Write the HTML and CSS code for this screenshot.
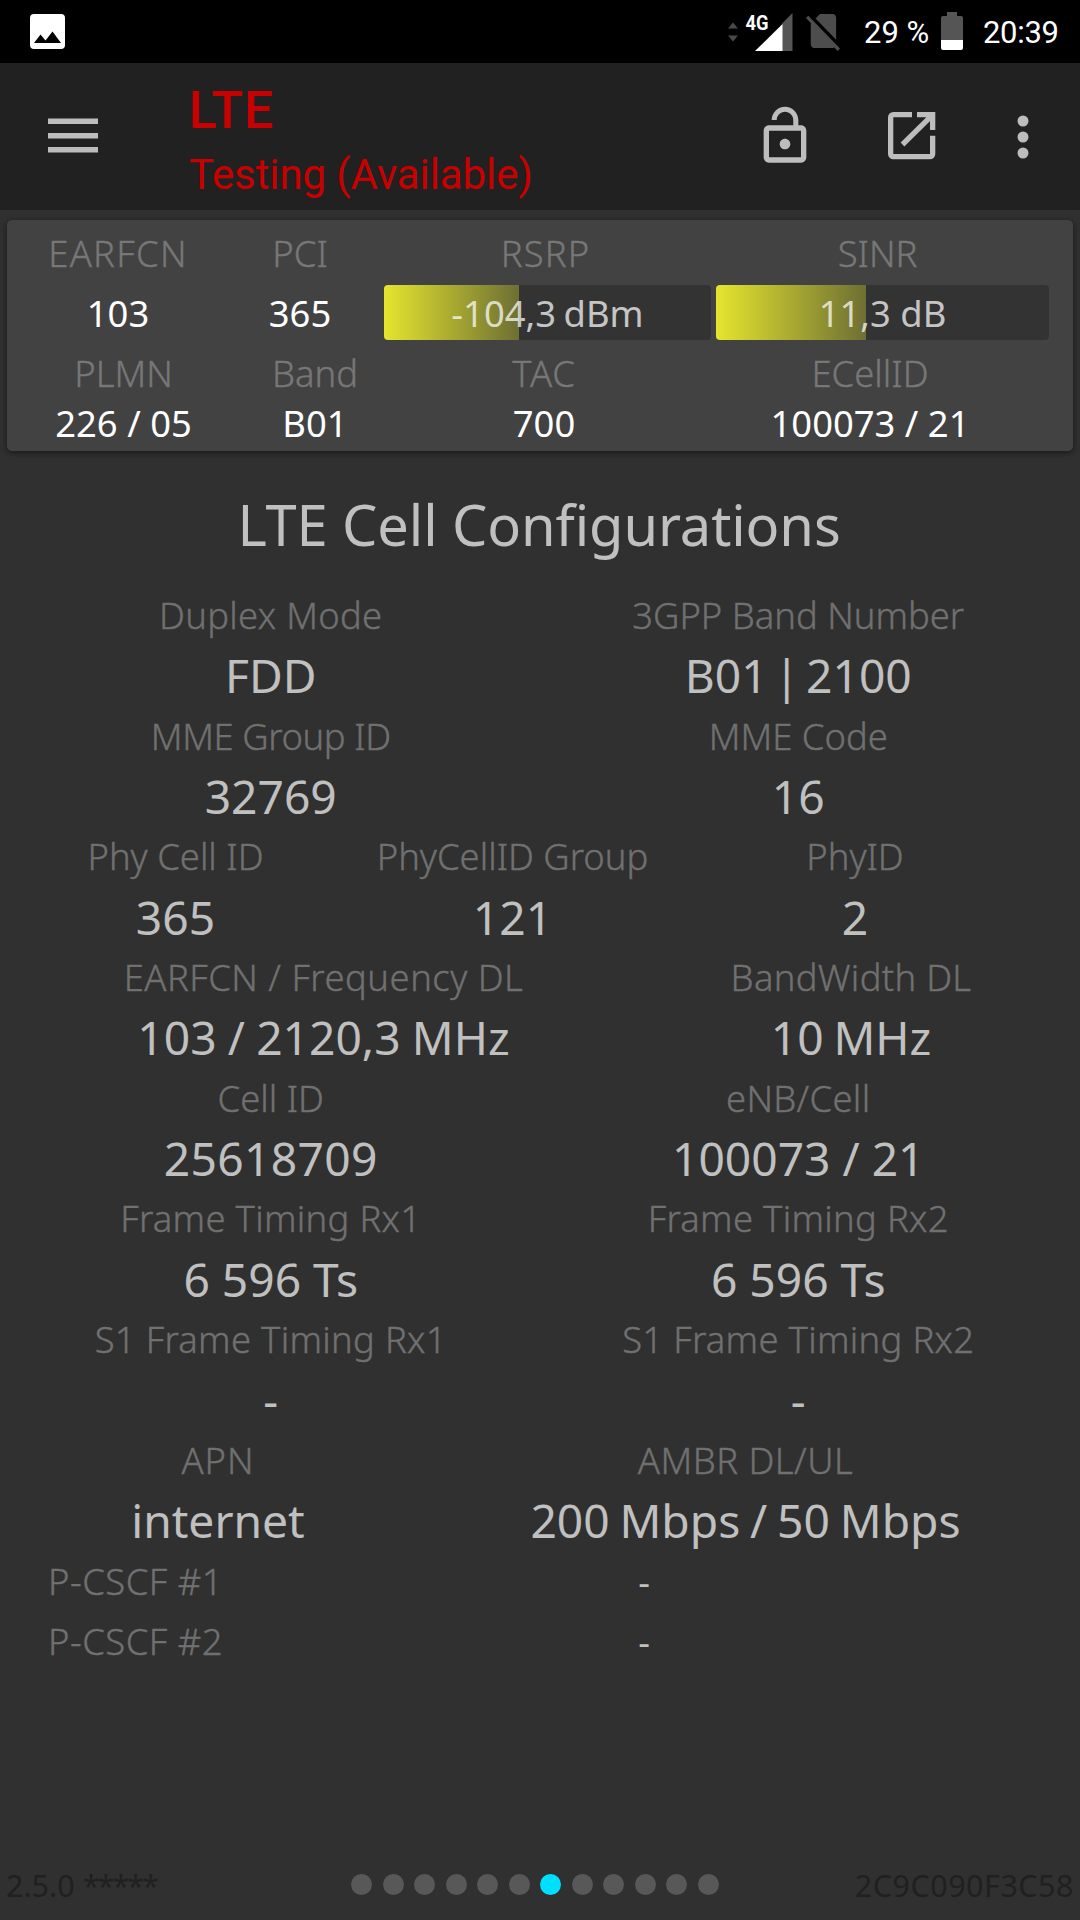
FILE: index.html
```html
<!DOCTYPE html>
<html lang="en">
<head>
<meta charset="utf-8">
<title>LTE Cell Configurations</title>
<link rel="stylesheet" href="styles.css">
</head>
<body>
<div class="screen">
  <div class="status">
    <svg class="photo" width="35" height="35" viewBox="0 0 35 35"><path fill="#fff" fill-rule="evenodd" d="M4 0h27a4 4 0 0 1 4 4v27a4 4 0 0 1-4 4H4a4 4 0 0 1-4-4V4a4 4 0 0 1 4-4zM4 29h27L22.500 17.500 15.500 26.500 10.500 20.500z"/></svg>
    <svg class="radio" width="65" height="47" viewBox="0 -8 65 47">
      <path fill="#4a4a4a" d="M0 15.500l5-6 5 6zM0 22.500h10l-5 6z"/>
      <path fill="#555" d="M54 10.500L64.500 0v38H54z"/>
      <path fill="#fff" d="M27 38L54.500 11v27z"/>
      <text class="net" x="17.500" y="16.500" textLength="23" lengthAdjust="spacingAndGlyphs">4G</text>
    </svg>
    <svg class="sim" width="34" height="37" viewBox="2.380 3 18.740 19.620" preserveAspectRatio="none">
      <path fill="#4d4d4d" d="M18.990 5c0-1.100-.890-2-1.990-2h-7L7.660 5.340 19 16.680 18.990 5zM3.650 3.880L2.380 5.150 5 7.770V19c0 1.100.9 2 2 2h10.010c.350 0 .670-.1.960-.260l1.880 1.880 1.270-1.270L3.650 3.880z"/>
    </svg>
    <span class="percent">29 %</span>
    <svg class="battery" width="22" height="38" viewBox="0 0 22 38">
      <path fill="#555" d="M6 0h10v4h4q2 0 2 2v22H0V6q0-2 2-2h4z"/>
      <path fill="#fff" d="M0 28h22v8q0 2-2 2H2q-2 0-2-2z"/>
    </svg>
    <span class="clock">20:39</span>
  </div>

  <div class="toolbar">
    <svg class="menu" width="50" height="36" viewBox="0 0 50 36"><path fill="#bdbdbd" d="M0 .5h50v5.500H0zM0 15h50v5.500H0zM0 29h50v5.500H0z"/></svg>
    <div class="titles">
      <div class="tech">LTE</div>
      <div class="state">Testing (Available)</div>
    </div>
    <svg class="lock" width="64" height="64" viewBox="0 0 24 24"><path fill="#bdbdbd" d="M12 17c1.100 0 2-.9 2-2s-.9-2-2-2-2 .9-2 2 .9 2 2 2zm6-9h-1V6c0-2.760-2.240-5-5-5S7 3.240 7 6h1.900c0-1.710 1.390-3.100 3.100-3.100 1.710 0 3.100 1.390 3.100 3.100v2H6c-1.100 0-2 .9-2 2v10c0 1.100.9 2 2 2h12c1.100 0 2-.9 2-2V10c0-1.100-.9-2-2-2zm0 12H6V10h12v10z"/></svg>
    <svg class="open" width="48" height="48" viewBox="0 0 48 48"><path fill="none" stroke="#bdbdbd" stroke-width="5.300" d="M24 2.650H5.300a2.650 2.650 0 0 0-2.650 2.650V42a2.650 2.650 0 0 0 2.650 2.650H42a2.650 2.650 0 0 0 2.650-2.650V23.700M29 2.650H44.650V18M44 3.300L14.500 32.500"/></svg>
    <svg class="more" width="12" height="44" viewBox="0 0 12 44"><g fill="#bdbdbd"><circle cx="6" cy="6" r="5.500"/><circle cx="6" cy="22" r="5.500"/><circle cx="6" cy="38" r="5.500"/></g></svg>
  </div>

  <div class="card">
    <div class="grid top">
      <div class="label earfcn">EARFCN</div><div class="label">PCI</div><div class="label rsrp-name">RSRP</div><div class="label sinr">SINR</div>
      <div class="val">103</div><div class="val">365</div>
      <div class="meter rsrp"><span>-104,3 dBm</span></div>
      <div class="meter snr"><span>11,3 dB</span></div>
    </div>
    <div class="grid bottom">
      <div class="label">PLMN</div><div class="label">Band</div><div class="label tac">TAC</div><div class="label">ECellID</div>
      <div class="val">226 / 05</div><div class="val">B01</div><div class="val">700</div><div class="val">100073 / 21</div>
    </div>
  </div>

  <h1>LTE Cell Configurations</h1>

  <div class="config">
    <div class="row half">
      <div class="label loose">Duplex Mode</div><div class="label">3GPP Band Number</div>
      <div class="big">FDD</div><div class="big band-number">B01 | 2100</div>
      <div class="label mme-group">MME Group ID</div><div class="label">MME Code</div>
      <div class="big">32769</div><div class="big">16</div>
    </div>
    <div class="row thirds">
      <div class="label">Phy Cell ID</div><div class="label">PhyCellID Group</div><div class="label">PhyID</div>
      <div class="big">365</div><div class="big">121</div><div class="big">2</div>
    </div>
    <div class="row wide-left">
      <div class="label looser">EARFCN / Frequency DL</div><div class="label loose">BandWidth DL</div>
      <div class="big frequency">103 / 2120,3 MHz</div><div class="big tight">10 MHz</div>
    </div>
    <div class="row half">
      <div class="label">Cell ID</div><div class="label loose">eNB/Cell</div>
      <div class="big loose">25618709</div><div class="big">100073 / 21</div>
      <div class="label loose">Frame Timing Rx1</div><div class="label loose">Frame Timing Rx2</div>
      <div class="big">6 596 Ts</div><div class="big">6 596 Ts</div>
      <div class="label loose">S1 Frame Timing Rx1</div><div class="label loose">S1 Frame Timing Rx2</div>
      <div class="big">-</div><div class="big">-</div>
    </div>
    <div class="row wide-right">
      <div class="label tac">APN</div><div class="label looser">AMBR DL/UL</div>
      <div class="big">internet</div><div class="big tight">200 Mbps / 50 Mbps</div>
    </div>
    <div class="row cscf">
      <div class="label looser">P-CSCF #1</div><div class="dash">-</div>
      <div class="label looser">P-CSCF #2</div><div class="dash">-</div>
    </div>
  </div>

  <div class="footer">
    <span class="version">2.5.0 <span class="stars">*****</span></span>
    <div class="dots"><i></i><i></i><i></i><i></i><i></i><i></i><i class="on"></i><i></i><i></i><i></i><i></i><i></i></div>
    <span class="device">2C9C090F3C58</span>
  </div>
</div>
</body>
</html>
```
FILE: styles.css
```css
* { box-sizing: border-box; }
body { margin: 0; background: #303030; }
svg { display: block; flex: none; overflow: visible; }
.screen {
  width: 1080px;
  height: 1920px;
  display: flex;
  flex-direction: column;
  overflow: hidden;
  background: #303030;
  color: #c0c0c0;
  font-family: "Noto Sans", sans-serif;
  white-space: nowrap;
}

/* system status bar */
.status {
  height: 63px;
  flex: none;
  display: flex;
  align-items: flex-start;
  padding-left: 30px;
  background: #000;
  color: #fff;
  font: 31px/36px Roboto, sans-serif;
}
.photo { margin-top: 14px; }
.radio { margin: 5px 0 0 663px; }
.net { font: bold 21px Roboto, sans-serif; fill: #fff; }
.sim { margin: 14px 0 0 13px; }
.percent { margin: 15px 0 0 24px; width: 64px; }
.battery { margin: 12px 0 0 13px; }
.clock { margin: 15px 0 0 20px; letter-spacing: -.3px; }

/* app toolbar */
.toolbar {
  height: 147px;
  flex: none;
  display: flex;
  align-items: flex-start;
  padding-left: 48px;
  background: #212121;
}
.menu { margin-top: 55px; }
.titles { margin: 18px 0 0 91px; width: 564px; color: #c80000; font-family: Roboto, sans-serif; }
.tech { font-size: 52px; line-height: 60px; font-weight: 500; letter-spacing: .9px; }
.state { font-size: 42px; line-height: 68px; letter-spacing: -.1px; }
.lock { margin-top: 41px; }
.open { margin: 49px 0 0 71px; }
.more { margin: 52px 0 0 81px; }

/* serving cell summary */
.card {
  margin: 10px 7px 0;
  height: 231px;
  flex: none;
  border-radius: 5px;
  background: #424242;
  box-shadow: 0 2px 6px rgba(0, 0, 0, .5);
}
.grid { display: grid; text-align: center; }
.top {
  grid-template-columns: 196px 168px 332px 333px;
  grid-template-rows: 65px 55px;
  padding-left: 13px;
}
.bottom {
  grid-template-columns: 217px 166px 292px 360px;
  grid-template-rows: 61px 44px;
  padding-left: 8px;
}
.label {
  font-size: 36.400px;
  font-weight: 300;
  color: #707070;
  -webkit-text-stroke: .4px #707070;
}
.card .label { color: #777; -webkit-text-stroke-color: #777; }
.val { font-size: 36.400px; color: #fff; }
.top .label { line-height: 66px; }
.top .val { line-height: 57px; }
.bottom .label { line-height: 67px; }
.bottom .val { line-height: 44px; }
.top .earfcn { letter-spacing: 1.300px; }
.top .rsrp-name { padding-right: 9px; letter-spacing: 1.100px; }
.top .sinr { padding-right: 10px; }
.tac { letter-spacing: .9px; }
.meter {
  height: 55px;
  border-radius: 4px;
  background: #333 linear-gradient(90deg, #e5e52f, #6e6f33) no-repeat;
  font-size: 36.400px;
  line-height: 57px;
  color: rgba(255, 255, 255, .72);
}
.rsrp { width: 327px; background-size: 135px 100%; word-spacing: -2px; }
.snr { background-size: 150px 100%; }

h1 {
  margin: 29px 0 0;
  padding-right: 2px;
  height: 105px;
  flex: none;
  font-size: 56px;
  line-height: 88px;
  font-weight: 400;
  letter-spacing: -.1px;
  text-align: center;
}

/* cell configuration table */
.config { margin-left: 7px; width: 1055px; flex: none; }
.row { display: grid; text-align: center; line-height: 60.350px; grid-auto-rows: 60.350px; }
.half { grid-template-columns: 1fr 1fr; }
.thirds { grid-template-columns: 337px 337px 348px; }
.wide-left { grid-template-columns: 3fr 2fr; }
.wide-right { grid-template-columns: 2fr 3fr; }
.cscf { grid-template-columns: 220px 834px; }
.cscf .label { padding-left: 41px; text-align: left; }
.big { font-size: 46.200px; line-height: 62.350px; }
.dash { font-size: 36.400px; }
.loose { letter-spacing: .3px; }
.looser { letter-spacing: .5px; }
.mme-group { letter-spacing: -.4px; }
.band-number { word-spacing: -5.500px; }
.frequency { word-spacing: -.8px; }
.tight { word-spacing: -2.200px; }

/* version, page indicator, device id */
.footer {
  margin-top: auto;
  height: 60px;
  flex: none;
  display: grid;
  grid-template-columns: 351px 368px 1fr;
  padding: 0 6px 0 0;
  color: #202020;
  font-size: 30.500px;
  line-height: 50px;
}
.version { padding-left: 6px; }
.stars { letter-spacing: -1.900px; }
.device { text-align: right; letter-spacing: .5px; }
.dots { display: flex; gap: 10.500px; padding-top: 14px; }
.dots i { width: 21px; height: 21px; flex: none; border-radius: 50%; background: #585858; }
.dots .on { background: #00dfff; }
```
